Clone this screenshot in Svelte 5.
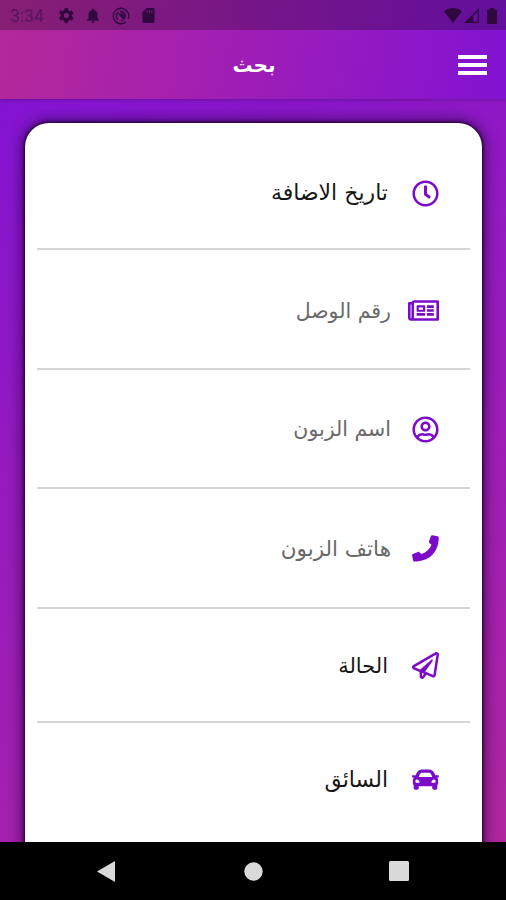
<script>
  const fields = [
    { icon: 'clock', label: 'تاريخ الاضافة', filled: true },
    { icon: 'newspaper', label: 'رقم الوصل', filled: false },
    { icon: 'user', label: 'اسم الزبون', filled: false },
    { icon: 'phone', label: 'هاتف الزبون', filled: false },
    { icon: 'plane', label: 'الحالة', filled: true },
    { icon: 'car', label: 'السائق', filled: true },
  ];

  const icons = {
    clock: {
      box: '0 0 512 512',
      path: 'M256 8C119 8 8 119 8 256s111 248 248 248 248-111 248-248S393 8 256 8zm0 448c-110.500 0-200-89.500-200-200S145.500 56 256 56s200 89.500 200 200-89.500 200-200 200zm61.800-104.400l-84.900-61.700c-3.100-2.300-4.900-5.900-4.900-9.700V116c0-6.600 5.400-12 12-12h32c6.600 0 12 5.400 12 12v141.700l66.800 48.600c5.400 3.900 6.500 11.400 2.600 16.800L334.600 349c-3.900 5.300-11.400 6.500-16.800 2.600z',
    },
    newspaper: {
      box: '0 64 576 384',
      path: 'M552 64H112c-20.900 0-38.600 13.400-45.200 32H24c-13.300 0-24 10.700-24 24v272c0 30.900 25.100 56 56 56h496c13.300 0 24-10.700 24-24V88c0-13.300-10.700-24-24-24zM48 392V144h16v248c0 4.400-3.600 8-8 8s-8-3.600-8-8zm480 8H111.400c.4-2.600.6-5.300.6-8V112h416v288zM172 280h136c6.600 0 12-5.400 12-12v-96c0-6.600-5.400-12-12-12H172c-6.600 0-12 5.400-12 12v96c0 6.600 5.400 12 12 12zm28-80h80v40h-80v-40zM160 304h160v48H160zM352 304h128v48H352zM352 160h128v48H352zM352 232h128v48H352z',
    },
    user: {
      box: '-8 0 512 512',
      path: 'M248 104c-53 0-96 43-96 96s43 96 96 96 96-43 96-96-43-96-96-96zm0 144c-26.500 0-48-21.500-48-48s21.500-48 48-48 48 21.500 48 48-21.500 48-48 48zm0-240C111 8 0 119 0 256s111 248 248 248 248-111 248-248S385 8 248 8zm0 448c-49.700 0-95.100-18.300-130.100-48.400 14.900-23 40.400-38.600 69.600-39.500 20.800 6.400 40.600 9.600 60.500 9.600s39.700-3.100 60.500-9.600c29.200 1 54.700 16.500 69.600 39.500-35 30.100-80.400 48.400-130.100 48.400zm162.700-84.100c-24.400-31.400-62.100-51.900-105.100-51.900-10.200 0-26 9.600-57.600 9.600-31.500 0-47.400-9.600-57.600-9.600-42.900 0-80.600 20.500-105.100 51.900C61.900 339.200 48 299.200 48 256c0-110.300 89.700-200 200-200s200 89.700 200 200c0 43.200-13.900 83.200-37.300 115.900z',
    },
    phone: {
      box: '0 0 512 512',
      path: 'M485 24L385 5c-12-2-22 4-26 14l-38 104c-4 10-1 20 7 27l42 34c-29 78-98 143-188 178l-44-37c-8-7-17-9-27-5L17 362c-11 4-17 14-15 26l20 98c2 11 11 18 23 18C325 506 507 326 507 48c0-12-9-21-22-24z',
    },
    plane: {
      box: '0 0 512 512',
      path: 'M440 6.500L24 246.400c-34.400 19.900-31.100 70.800 5.700 85.900L144 379.600V464c0 46.400 59.200 65.500 86.600 28.600l43.800-59.100 111.900 46.200c5.900 2.400 12.100 3.600 18.300 3.600 8.200 0 16.300-2.100 23.600-6.200 12.800-7.200 21.600-20 23.900-34.500l59.400-387.200c6.100-40.100-36.900-68.800-71.500-48.900zM192 464v-64.600l36.600 15.100L192 464zm212.600-28.700l-153.800-63.500L391 169.500c10.700-15.500-9.500-33.500-23.700-21.200L155.800 332.600 48 288 464 48l-59.400 387.300z',
    },
    car: {
      box: '0 0 512 512',
      path: 'M500 176h-59.900l-16.600-41.600C406.400 91.600 365.600 64 319.500 64h-127c-46.100 0-86.900 27.600-104 70.400L71.900 176H12C4.200 176-1.500 183.300.4 190.900l6 24C7.700 220.300 12.500 224 18 224h20.100C24.700 235.700 16 252.800 16 272v48c0 16.100 6.200 30.700 16 41.900V416c0 17.700 14.300 32 32 32h32c17.700 0 32-14.300 32-32v-32h256v32c0 17.700 14.300 32 32 32h32c17.700 0 32-14.300 32-32v-54.100c9.800-11.200 16-25.800 16-41.900v-48c0-19.200-8.700-36.300-22.100-48H494c5.500 0 10.300-3.800 11.600-9.100l6-24c1.900-7.600-3.800-14.900-11.600-14.900zm-352.100-17.800c7.300-18.200 25-30.200 44.600-30.200h127c19.600 0 37.300 12 44.600 30.200L384 208H128l19.900-49.800zM96 319.800c-19.200 0-32-12.800-32-31.900S76.800 256 96 256s48 28.700 48 47.900-28.800 15.900-48 15.900zm320 0c-19.200 0-48 3.200-48-15.900S396.800 256 416 256s32 12.800 32 31.900-12.800 31.900-32 31.900z',
    },
  };
</script>

<div class="screen">
  <header>
    <div class="status">
      <span class="time">3:34</span>
      <svg class="gear" width="17" height="17" viewBox="2 2 20 20"><path fill-rule="evenodd" d="M19.400 13a7.500 7.500 0 0 0 0-2l2.100-1.600-2-3.500-2.500 1a7.300 7.300 0 0 0-1.700-1L15 3.200h-4l-.5 2.700c-.6.200-1.200.6-1.700 1l-2.500-1-2 3.500L6.500 11a7.500 7.500 0 0 0 0 2l-2.200 1.600 2 3.500 2.500-1c.5.4 1.100.8 1.700 1l.5 2.700h4l.4-2.700c.6-.2 1.200-.6 1.700-1l2.500 1 2-3.500zM13 15a3 3 0 1 1 0-6 3 3 0 0 1 0 6z" /></svg>
      <svg class="bell" width="14" height="15" viewBox="4 2 16 20"><path d="M12 22a2 2 0 0 0 2-2h-4a2 2 0 0 0 2 2zm6-6v-5c0-3.100-1.600-5.600-4.500-6.300V4a1.500 1.500 0 0 0-3 0v.7C7.600 5.400 6 7.900 6 11v5l-2 2v1h16v-1z" /></svg>
      <svg class="sync" width="18" height="18" viewBox="0 0 18 18" fill="none" stroke="currentColor">
        <circle cx="9" cy="9" r="7.800" stroke-width="1.400" stroke-dasharray="45 4" transform="rotate(50 9 9)" />
        <path d="M6 12.800A4.700 4.700 0 0 1 6.500 5.200M8 4.600a4.600 4.600 0 0 1 5 6.500M7 7l5.500 5.500M9 13.500l2.300.1" stroke-width="1.500" />
        <path d="M7 6.500h3.500L13 9v2.500z" fill="currentColor" stroke="none" />
      </svg>
      <svg class="card-icon" width="13" height="15" viewBox="0 0 13 16"><path fill-rule="evenodd" d="M4.500 0h7C12.400 0 13 .7 13 1.500v13c0 .8-.6 1.500-1.500 1.500h-10C.7 16 0 15.300 0 14.500v-10zM4.500 2.500v2.500h1.200V2.500zM7 2.500v2.500h1.200V2.500zM9.500 2.500v2.500h1.200V2.500z" /></svg>
      <div class="signals">
        <svg width="18" height="15" viewBox="0 0 18 15"><path d="M0 3.400C5 -1 13-1 18 3.400L9 15z" /></svg>
        <svg class="cell" width="15" height="15" viewBox="0 0 15 15"><path fill-rule="evenodd" d="M15 0v15H0zM13.700 3.200L9.200 7.700v6h4.500z" /></svg>
        <svg width="10" height="16" viewBox="0 0 10 16"><path d="M3 0h4v1.500h2c.6 0 1 .4 1 1V15c0 .6-.4 1-1 1H1c-.6 0-1-.4-1-1V2.500c0-.6.400-1 1-1h2z" /></svg>
      </div>
    </div>
    <div class="appbar">
      <h1>بحث</h1>
      <button class="menu" aria-label="القائمة">
        <span></span>
        <span></span>
        <span></span>
      </button>
    </div>
  </header>

  <main>
    <div class="card">
      {#each fields as field}
        <div class="field {field.icon}" dir="rtl">
          <svg viewBox={icons[field.icon].box}><path d={icons[field.icon].path} /></svg>
          <span class="label" class:filled={field.filled}>{field.label}</span>
        </div>
      {/each}
    </div>
  </main>

  <nav>
    <svg width="18" height="21" viewBox="0 0 18 21"><path d="M18 0v21L0 10.500z" /></svg>
    <svg class="home" width="19" height="19" viewBox="0 0 19 19"><circle cx="9.500" cy="9.500" r="9.200" /></svg>
    <svg width="20" height="20" viewBox="0 0 20 20"><rect width="20" height="20" rx="1.500" /></svg>
  </nav>
</div>

<style>
  :global(body) {
    margin: 0;
  }

  .screen {
    width: 506px;
    height: 900px;
    display: flex;
    flex-direction: column;
    overflow: hidden;
    font-family: "DejaVu Sans", sans-serif;
  }

  header {
    position: relative;
    height: 99px;
    flex: none;
    background: linear-gradient(100deg, #b42998 0%, #a420b0 38%, #8213d3 100%);
    box-shadow: 0 1px 4px rgba(0, 0, 0, 0.25);
  }

  .status {
    display: flex;
    align-items: center;
    box-sizing: border-box;
    height: 30px;
    padding: 1px 9px 0 10px;
    background: rgba(0, 0, 0, 0.25);
    color: #300840;
  }

  .status svg {
    flex: none;
  }

  .status svg:not(.sync) {
    fill: currentColor;
  }

  .time {
    width: 47px;
    font-family: Roboto, sans-serif;
    font-size: 17.500px;
    color: #55155f;
  }

  .bell {
    margin-left: 12px;
  }

  .sync {
    margin-left: 12px;
  }

  .card-icon {
    margin-left: 12px;
  }

  .signals {
    display: flex;
    align-items: center;
    margin-left: auto;
  }

  .cell {
    margin: 0 8px 0 2px;
  }

  .appbar {
    display: flex;
    align-items: center;
    justify-content: flex-end;
    height: 69px;
    padding-right: 19px;
  }

  h1 {
    width: 48px;
    margin: 0 180px 0 0;
    font-size: 20px;
    line-height: 30px;
    text-align: center;
    color: #fff;
  }

  .menu {
    display: flex;
    flex-direction: column;
    gap: 4px;
    width: 29px;
    padding: 0;
    border: 0;
    background: none;
  }

  .menu span {
    height: 4px;
    background: #fff;
  }

  main {
    flex: 1;
    min-height: 0;
    padding: 24px 24px 0 25px;
    background: linear-gradient(155deg, #8414d4 0%, #8c17c9 18%, #a621ad 78%, #b0279d 100%);
    overflow: hidden;
  }

  .card {
    box-sizing: border-box;
    height: 750px;
    padding: 6px 12px 0;
    border-radius: 24px 24px 0 0;
    background: #fff;
    box-shadow: 0 0 3px 1px rgba(20, 0, 35, 0.9), 0 0 14px 3px rgba(20, 0, 40, 0.6);
  }

  .field {
    display: flex;
    align-items: center;
    box-sizing: border-box;
    height: 119.500px;
    padding: 2px 31px 0 0;
    border-bottom: 2px solid #d5d5d5;
  }

  .field svg {
    flex: none;
    width: 27px;
    height: 27px;
    fill: #7b0bc9;
  }

  .field.clock {
    height: 121px;
    padding-top: 9px;
  }

  .field.newspaper {
    padding-top: 4px;
  }

  .field.newspaper svg {
    width: 31px;
    height: 21px;
  }

  .field.plane {
    height: 114px;
  }

  .field.car {
    height: 112px;
    border-bottom: 0;
  }

  .label {
    margin-right: 21px;
    font-size: 21px;
    line-height: 32px;
    white-space: nowrap;
    color: #696969;
  }

  .label.filled {
    margin-right: 24px;
    color: #171717;
  }

  .clock .label {
    font-size: 22px;
  }

  .newspaper .label {
    margin-right: 17px;
    font-size: 20.500px;
  }

  .user .label {
    font-size: 20.500px;
  }

  .phone .label {
    font-size: 21.500px;
  }

  .car .label {
    font-size: 22px;
  }

  nav {
    display: flex;
    align-items: center;
    justify-content: center;
    flex: none;
    height: 58px;
    background: #000;
  }

  nav svg {
    fill: #dadada;
  }

  .home {
    margin: 0 126px 0 129px;
  }
</style>
